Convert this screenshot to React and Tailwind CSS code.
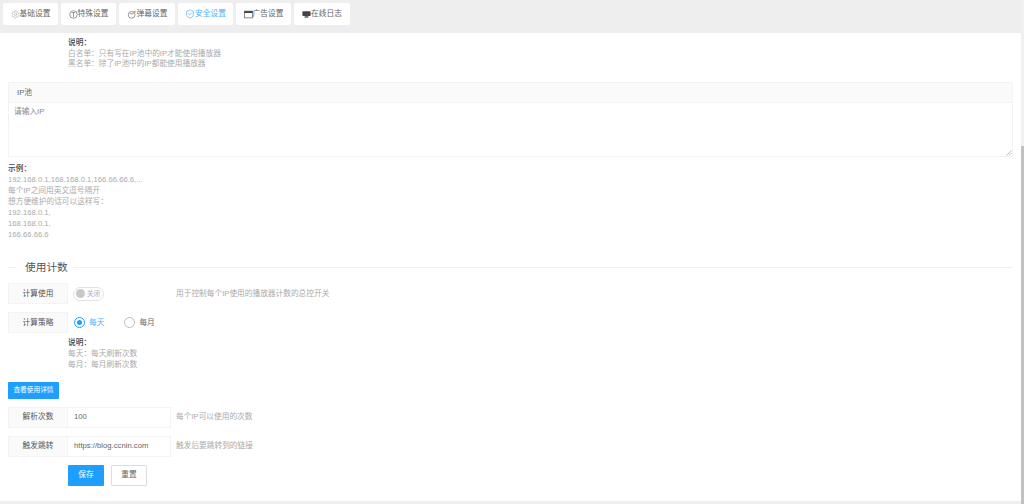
import React from 'react';
import { Settings, ShieldCheck } from 'lucide-react';

const font = { fontFamily: '"Liberation Sans", "Noto Sans CJK SC", sans-serif' };

function SpecialIcon() {
  return (
    <svg width="9" height="9" viewBox="0 0 12 12" fill="none" stroke="#777" strokeWidth="1">
      <circle cx="6" cy="6" r="5" />
      <path d="M3.5 3.5h5M6 3.5v6" />
    </svg>
  );
}

function PopupIcon() {
  return (
    <svg width="10" height="9" viewBox="0 0 12 12" fill="none" stroke="#777" strokeWidth="1">
      <circle cx="5.5" cy="6.5" r="4.5" />
      <path d="M3 5h5M8 2.5h3.5" />
    </svg>
  );
}

function AdIcon() {
  return (
    <svg width="9" height="9" viewBox="0 0 12 12" fill="none">
      <rect x="0.5" y="1.5" width="11" height="9" stroke="#666" />
      <rect x="0.5" y="1.5" width="11" height="2.5" fill="#444" />
    </svg>
  );
}

function LogIcon() {
  return (
    <svg width="9" height="9" viewBox="0 0 12 12">
      <rect x="0.5" y="1.5" width="11" height="6.5" rx="1" fill="#444" />
      <rect x="3.5" y="8" width="5" height="2.5" fill="#777" />
    </svg>
  );
}

const tabs = [
  { label: '基础设置', icon: <Settings size={9} color="#bbb" />, w: 'w-[55px]' },
  { label: '特殊设置', icon: <SpecialIcon />, w: 'w-[55px]' },
  { label: '弹幕设置', icon: <PopupIcon />, w: 'w-[56px]' },
  { label: '安全设置', icon: <ShieldCheck size={10} color="#5fb8ff" />, w: 'w-[55px]', active: true },
  { label: '广告设置', icon: <AdIcon />, w: 'w-[55px]' },
  { label: '在线日志', icon: <LogIcon />, w: 'w-[56px]' },
];

function Tabs() {
  return (
    <div className="flex gap-[3px] pt-[3px] pl-[3px] h-[33px]">
      {tabs.map((t) => (
        <div
          key={t.label}
          className={`${t.w} h-[22px] flex items-center justify-center bg-white rounded-[2px] text-[7.7px] ${t.active ? 'text-[#4eb1ff]' : 'text-[#666]'}`}
        >
          {t.icon}
          <span>{t.label}</span>
        </div>
      ))}
    </div>
  );
}

function Note({ title, lines, className }) {
  return (
    <div className={`text-[7.7px] leading-[10.7px] text-[#aaa] ${className}`}>
      <div className="text-[#444] font-medium">{title}</div>
      {lines.map((l) => (
        <div key={l}>{l}</div>
      ))}
    </div>
  );
}

function Label({ children }) {
  return (
    <div className="w-[60px] h-[21px] shrink-0 flex items-center justify-center bg-[#fafafa] border border-[#f3f3f3] text-[7.7px] text-[#555]">
      {children}
    </div>
  );
}

function InputRow({ label, value, hint, className }) {
  return (
    <div className={`flex items-center ml-2 ${className}`}>
      <Label>{label}</Label>
      <div className="w-[103px] h-[21px] flex items-center pl-[6px] border border-l-0 border-[#f3f3f3] text-[7.7px] text-[#666]">
        {value}
      </div>
      <span className="ml-[5px] text-[7.7px] text-[#aaa]">{hint}</span>
    </div>
  );
}

function Radio({ checked, children }) {
  return (
    <div className={`flex items-center gap-[4px] text-[7.7px] ${checked ? 'text-[#4eb1ff]' : 'text-[#666]'}`}>
      <span className={`w-[11px] h-[11px] rounded-full border flex items-center justify-center ${checked ? 'border-[#1e9fff]' : 'border-[#bbb]'}`}>
        {checked && <span className="w-[5px] h-[5px] rounded-full bg-[#1e9fff]" />}
      </span>
      {children}
    </div>
  );
}

export default function App() {
  return (
    <div className="flex w-[1024px] h-[504px] overflow-hidden bg-[#eeeeee]" style={font}>
      <div className="w-[1021px]">
        <Tabs />
        <div className="h-[468px] bg-white rounded-t-[2px] pt-[5px]">
          <Note
            title="说明："
            lines={['白名单：只有写在IP池中的IP才能使用播放器', '黑名单：除了IP池中的IP都能使用播放器']}
            className="ml-[68px]"
          />
          <div className="relative mt-[12px] mx-2 w-[1005px] h-[75px] border border-[#f3f3f3] flex flex-col">
            <div className="h-[20px] shrink-0 flex items-center pl-2 bg-[#fafafa] border-b border-[#f3f3f3] text-[7.7px] text-[#666]">
              IP池
            </div>
            <textarea
              className="flex-1 resize-none px-[5px] py-[2px] text-[7.7px] leading-[13px] outline-none placeholder:text-[#888]"
              placeholder="请输入IP"
            />
            <svg className="absolute right-0 bottom-0" width="6" height="6" viewBox="0 0 6 6" stroke="#aaa" strokeWidth="0.8">
              <path d="M0.5 5.5l5-5M3 5.5l2.5-2.5" />
            </svg>
          </div>
          <Note
            title="示例："
            lines={[
              '192.168.0.1,168.168.0.1,166.66.66.6,...',
              '每个IP之间用英文逗号隔开',
              '想方便维护的话可以这样写：',
              '192.168.0.1,',
              '168.168.0.1,',
              '166.66.66.6',
            ]}
            className="ml-2 mt-[7px] leading-[10.9px]"
          />
          <div className="flex items-center ml-2 w-[1005px] mt-[19px] h-[16px]">
            <div className="w-[9px] h-px bg-[#f0f0f0]" />
            <span className="ml-2 mr-[5px] text-[10.7px] text-[#555]">使用计数</span>
            <div className="flex-1 h-px bg-[#f0f0f0]" />
          </div>
          <div className="flex items-center ml-2 mt-[8px]">
            <Label>计算使用</Label>
            <div className="ml-[5px] w-[31px] h-[14px] shrink-0 rounded-full border border-[#e2e2e2] flex items-center pl-[2px] gap-[2px] text-[6.5px] text-[#aaa]">
              <span className="w-[9px] h-[9px] rounded-full bg-[#c8c8c8]" />
              关闭
            </div>
            <span className="ml-[72px] text-[7.7px] text-[#aaa]">用于控制每个IP使用的播放器计数的总控开关</span>
          </div>
          <div className="flex items-center ml-2 mt-[8px]">
            <Label>计算策略</Label>
            <div className="flex items-center gap-[20px] ml-[6px]">
              <Radio checked>每天</Radio>
              <Radio>每月</Radio>
            </div>
          </div>
          <Note
            title="说明："
            lines={['每天：每天刷新次数', '每月：每月刷新次数']}
            className="ml-[68px] mt-[5px]"
          />
          <button className="block ml-2 mt-[11px] w-[51px] h-[17px] bg-[#1e9fff] rounded-[1px] text-white text-[6.7px]">
            查看使用详情
          </button>
          <InputRow label="解析次数" value="100" hint="每个IP可以使用的次数" className="mt-[8px]" />
          <InputRow label="触发跳转" value="https://blog.ccnin.com" hint="触发后要跳转到的链接" className="mt-[8px]" />
          <div className="flex ml-[68px] mt-[8px] gap-[7px]">
            <button className="w-[36px] h-[21px] bg-[#1e9fff] rounded-[1px] text-white text-[7.7px]">保存</button>
            <button className="w-[36px] h-[21px] bg-white border border-[#dddddd] rounded-[1px] text-[#666] text-[7.7px]">重置</button>
          </div>
        </div>
      </div>
      <div className="w-[3px] h-full bg-[#f1f1f1] pt-[146px]">
        <div className="h-full bg-[#c1c1c1]" />
      </div>
    </div>
  );
}
